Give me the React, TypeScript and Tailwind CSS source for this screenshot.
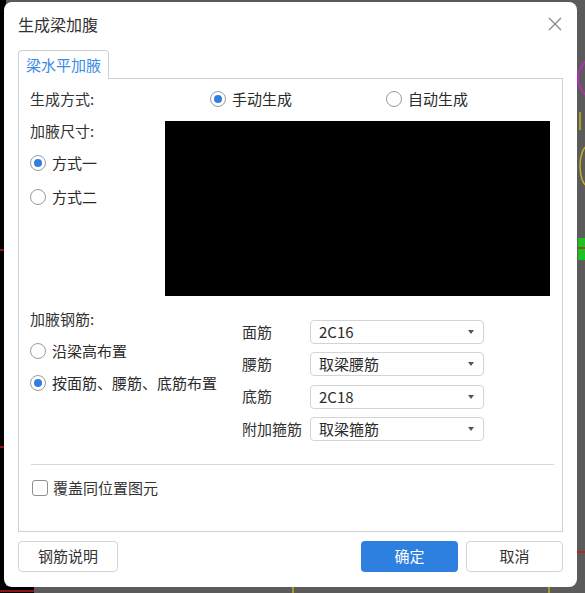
import React from "react";

const font = { fontFamily: '"Noto Sans CJK SC", "Noto Sans", sans-serif' };

function Radio({ checked, label }: { checked?: boolean; label: string }) {
  return (
    <div className="flex items-center h-[20px]">
      <span className="w-[16px] h-[16px] rounded-full border border-[#9a9a9a] bg-white flex items-center justify-center shrink-0">
        {checked && <span className="w-[8px] h-[8px] rounded-full bg-[#2f7fe0]" />}
      </span>
      <span className="ml-[6px] text-[15px] text-[#2b2b2b] leading-[20px] whitespace-nowrap">{label}</span>
    </div>
  );
}

function Select({ value }: { value: string }) {
  return (
    <div className="w-[174px] h-[24px] border border-[#d4d4d4] rounded-[4px] bg-white flex items-center justify-between pl-[8px] pr-[9px]">
      <span className="text-[15px] text-[#2b2b2b] leading-[20px]">{value}</span>
      <span className="w-0 h-0 border-l-[3px] border-r-[3px] border-t-[4px] border-l-transparent border-r-transparent border-t-[#555]" />
    </div>
  );
}

function Canvas() {
  return (
    <svg className="absolute inset-0" width="585" height="593">
      <rect x="0" y="0" width="585" height="593" fill="#5b5b5b" />
      <rect x="0" y="0" width="6" height="593" fill="#000" />
      <rect x="0" y="586" width="34" height="7" fill="#000" />
      <line x1="0" y1="250" x2="6" y2="250" stroke="#c0181c" strokeWidth="1.5" />
      <line x1="0" y1="447" x2="6" y2="447" stroke="#c0181c" strokeWidth="1.5" />
      <line x1="0" y1="591" x2="34" y2="591" stroke="#c0181c" strokeWidth="1.5" />
      <line x1="575" y1="552" x2="585" y2="552" stroke="#c0181c" strokeWidth="1.5" />
      <circle cx="600" cy="78" r="22" fill="none" stroke="#d020d0" strokeWidth="1.5" />
      <line x1="580" y1="112" x2="580" y2="130" stroke="#c8b020" strokeWidth="1.5" />
      <ellipse cx="588" cy="166" rx="8" ry="20" fill="none" stroke="#c8b020" strokeWidth="1.5" />
      <rect x="578" y="238" width="7" height="22" fill="#20c020" />
      <line x1="578" y1="248" x2="585" y2="248" stroke="#c0181c" strokeWidth="1.2" />
      <line x1="293" y1="586" x2="293" y2="593" stroke="#c8b020" strokeWidth="1.5" />
      <line x1="549" y1="586" x2="549" y2="593" stroke="#c8b020" strokeWidth="1.5" />
    </svg>
  );
}

export default function App() {
  return (
    <div className="relative w-[585px] h-[593px] overflow-hidden" style={font}>
      <Canvas />
      <div className="absolute left-[4px] top-[2px] w-[573px] h-[585px] bg-white rounded-[8px] flex flex-col px-[14px] pb-[15px]">
        {/* title */}
        <div className="h-[46px] flex items-center justify-between">
          <span className="text-[16px] text-[#333] -mt-[2px]">生成梁加腹</span>
          <svg width="14" height="14" viewBox="0 0 14 14" className="mr-[1px] -mt-[2px]">
            <path d="M1 1 L13 13 M13 1 L1 13" stroke="#8a8a8a" strokeWidth="1.4" />
          </svg>
        </div>

        {/* tab */}
        <div className="flex">
          <div className="h-[29px] px-[7px] border border-b-0 border-[#cdd1d6] rounded-t-[4px] bg-white flex items-center relative z-10 -mb-[1px] mt-[2px]">
            <span className="text-[15px] text-[#3c8be6]">梁水平加腋</span>
          </div>
        </div>

        {/* panel */}
        <div className="flex-1 border border-[#cdd1d6] pl-[11px] pr-[9px] pt-[10px]">
          <div className="flex items-center h-[20px]">
            <span className="w-[180px] text-[15px] text-[#333]">生成方式:</span>
            <div className="w-[176px]">
              <Radio checked label="手动生成" />
            </div>
            <Radio label="自动生成" />
          </div>

          <div className="flex mt-[12px]">
            <div className="w-[135px] flex flex-col">
              <span className="text-[15px] text-[#333] leading-[20px]">加腋尺寸:</span>
              <div className="mt-[12px]">
                <Radio checked label="方式一" />
              </div>
              <div className="mt-[14px]">
                <Radio label="方式二" />
              </div>
            </div>
            <div className="w-[385px] h-[175px] bg-black" />
          </div>

          <div className="flex mt-[13px]">
            <div className="w-[212px] flex flex-col">
              <span className="text-[15px] text-[#333] leading-[20px]">加腋钢筋:</span>
              <div className="mt-[12px]">
                <Radio label="沿梁高布置" />
              </div>
              <div className="mt-[12px]">
                <Radio checked label="按面筋、腰筋、底筋布置" />
              </div>
            </div>
            <div className="flex flex-col gap-[8.3px] mt-[11px]">
              {[
                ["面筋", "2C16"],
                ["腰筋", "取梁腰筋"],
                ["底筋", "2C18"],
                ["附加箍筋", "取梁箍筋"],
              ].map(([k, v]) => (
                <div key={k} className="flex items-center">
                  <span className="w-[68px] text-[15px] text-[#333] whitespace-nowrap">{k}</span>
                  <Select value={v} />
                </div>
              ))}
            </div>
          </div>

          <div className="mt-[23px] h-px bg-[#d6d6d6] -mr-[1px] ml-[1px]" />

          <div className="flex items-center mt-[12px] ml-[2px]">
            <span className="w-[16px] h-[16px] border border-[#8f8f8f] rounded-[3px] bg-white" />
            <span className="ml-[5px] text-[15px] text-[#333]">覆盖同位置图元</span>
          </div>
        </div>

        {/* footer */}
        <div className="flex items-center mt-[9px] h-[31px]">
          <button className="w-[100px] h-[31px] border border-[#d4d4d4] rounded-[4px] bg-white text-[15px] text-[#333]">
            钢筋说明
          </button>
          <div className="flex-1" />
          <button className="w-[97px] h-[31px] rounded-[4px] bg-[#2e80e0] text-[15px] text-white">确定</button>
          <button className="ml-[8px] w-[97px] h-[31px] border border-[#d4d4d4] rounded-[4px] bg-white text-[15px] text-[#333]">
            取消
          </button>
        </div>
      </div>
    </div>
  );
}
